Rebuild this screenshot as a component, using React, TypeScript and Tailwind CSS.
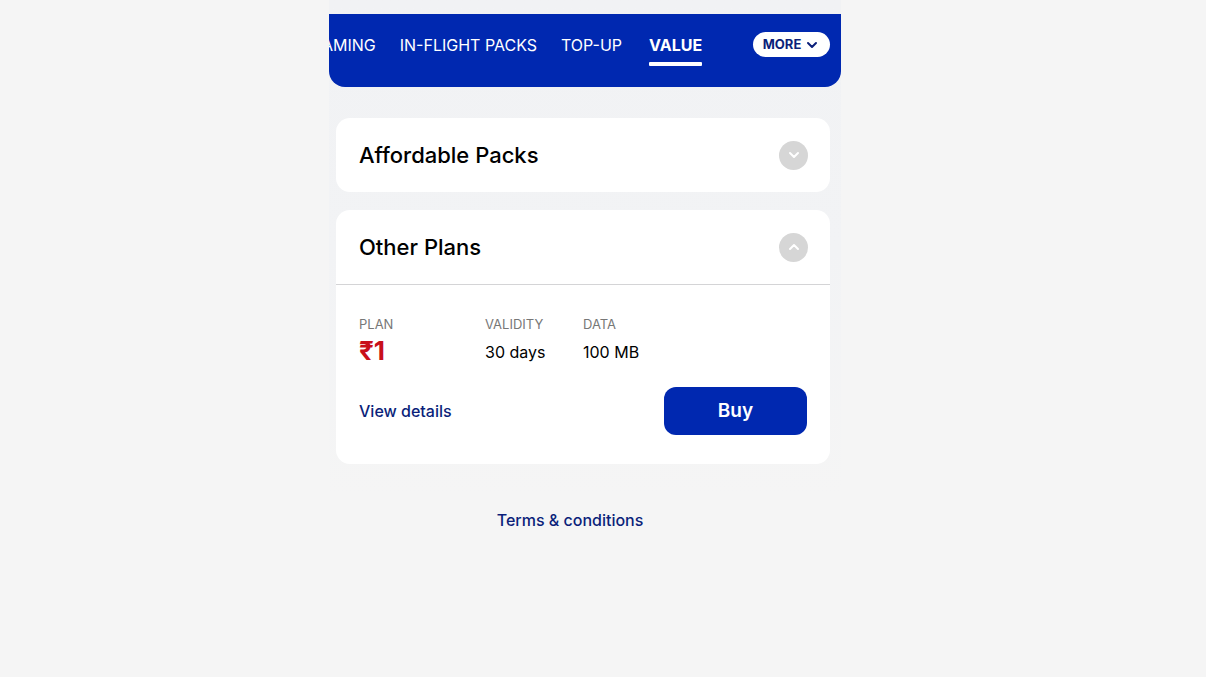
import React from "react";

const font = { fontFamily: "Inter, 'Liberation Sans', Arial, sans-serif" };

function Chevron({ up = false, className = "" }: { up?: boolean; className?: string }) {
  return (
    <svg viewBox="0 0 24 24" className={className} fill="none" stroke="currentColor" strokeWidth={3} strokeLinecap="round" strokeLinejoin="round">
      {up ? <path d="M6 15l6-6 6 6" /> : <path d="M6 9l6 6 6-6" />}
    </svg>
  );
}

export default function App() {
  return (
    <div className="min-h-[677px] w-full bg-[#f5f5f5]" style={font}>
      <div className="ml-[329px] w-[512px] pt-[14px] pb-[30px] bg-linear-to-b from-[#f1f2f4] via-[#f2f3f5] to-[#f5f5f5]">
        <div className="h-[73px] bg-[#0028b0] rounded-b-[16px] overflow-hidden flex items-start relative">
          <div className="flex items-start gap-[24px] pt-[19px] -ml-[29px] text-white text-[16px] whitespace-nowrap">
            <span>ROAMING</span>
            <span>IN-FLIGHT PACKS</span>
            <span>TOP-UP</span>
            <span className="ml-[3px] flex flex-col items-center font-bold">
              VALUE
              <span className="mt-[5px] h-[4px] w-full bg-white rounded-[1px]"></span>
            </span>
          </div>
          <div className="absolute left-[424px] top-[18px] h-[25px] w-[77px] bg-white rounded-full flex items-center justify-center gap-[3px] text-[#0b1f7a] text-[13px] font-bold">
            MORE
            <Chevron className="w-[16px] h-[16px]" />
          </div>
        </div>

        <div className="pl-[7px] pr-[11px] pt-[31px] flex flex-col gap-[18px]">
          <div className="bg-white rounded-[14px] h-[74px] flex items-center justify-between pl-[23px] pr-[22px]">
            <span className="text-[22px] text-black font-medium">Affordable Packs</span>
            <span className="w-[29px] h-[29px] rounded-full bg-[#d6d6d6] flex items-center justify-center text-white">
              <Chevron className="w-[16px] h-[16px]" />
            </span>
          </div>

          <div className="bg-white rounded-[14px]">
            <div className="h-[75px] flex items-center justify-between pl-[23px] pr-[22px] border-b border-[#d4d4d6]">
              <span className="text-[22px] text-black font-medium">Other Plans</span>
              <span className="w-[29px] h-[29px] rounded-full bg-[#d6d6d6] flex items-center justify-center text-white">
                <Chevron up className="w-[16px] h-[16px]" />
              </span>
            </div>
            <div className="pl-[23px] pr-[23px] pt-[31px] pb-[29px]">
              <div className="flex">
                <div className="w-[126px]">
                  <div className="text-[13px] text-[#777] leading-[16px]">PLAN</div>
                  <div className="text-[26px] font-bold text-[#c8101a] leading-[30px] mt-[4px]">₹1</div>
                </div>
                <div className="w-[98px]">
                  <div className="text-[13px] text-[#777] leading-[16px]">VALIDITY</div>
                  <div className="text-[16px] text-black leading-[20px] mt-[10px]">30 days</div>
                </div>
                <div>
                  <div className="text-[13px] text-[#777] leading-[16px]">DATA</div>
                  <div className="text-[16px] text-black leading-[20px] mt-[10px]">100 MB</div>
                </div>
              </div>
              <div className="flex items-center justify-between mt-[21px]">
                <span className="text-[16px] text-[#0b1f7a] font-medium">View details</span>
                <button className="w-[143px] h-[48px] rounded-[12px] bg-[#0028b0] text-white text-[19px] font-semibold">Buy</button>
              </div>
            </div>
          </div>
        </div>
      </div>

      <div className="ml-[329px] w-[512px] mt-[14px] pr-[30px] text-center text-[16px] text-[#0b1f7a] font-medium">Terms &amp; conditions</div>
    </div>
  );
}
